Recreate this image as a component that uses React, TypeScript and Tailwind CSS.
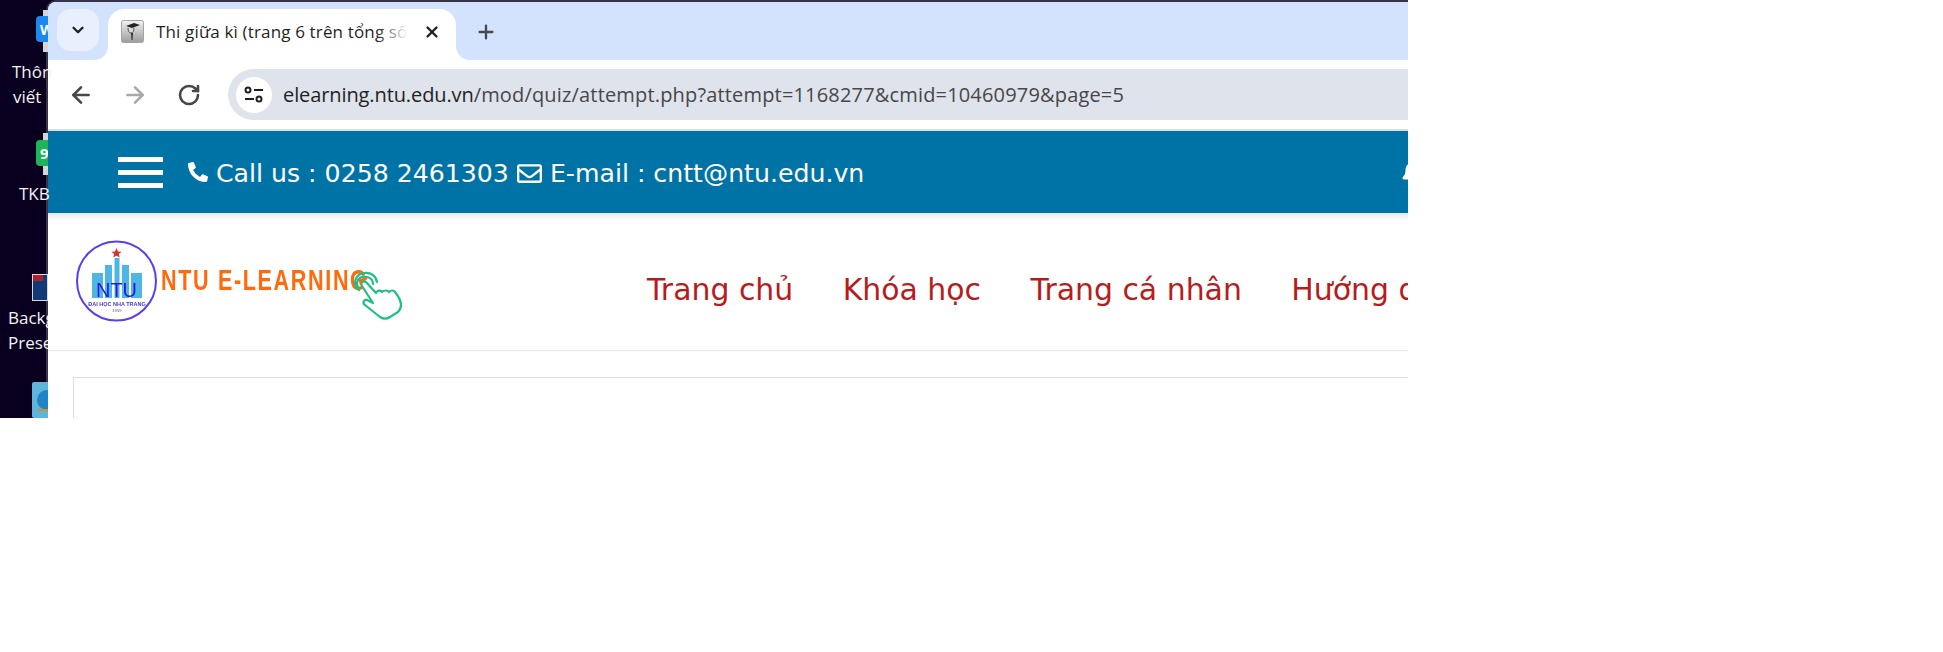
import React from 'react';
import { FaBell, FaPhoneAlt, FaRegEnvelope } from 'react-icons/fa';
import { ArrowLeft, ArrowRight, ChevronDown, Plus, RotateCw, X } from 'lucide-react';

const Desktop = () => (
  <div className="relative w-[46px] shrink-0 bg-[#09001f] font-['Open_Sans',sans-serif] text-[17px] leading-[25px] text-[#f4f4f4]">
    <div className="absolute left-[43px] top-[10px] h-[42px] w-[5px] bg-[#d5d5d5]" />
    <div className="absolute left-[36px] top-[16px] flex h-[26px] w-[12px] items-center overflow-hidden rounded-l-[4px] bg-[#1b87f0] pl-[4px] text-[14px] font-bold text-white">
      W
    </div>
    <div className="absolute left-[12px] top-[59px]">Thôn</div>
    <div className="absolute left-[13px] top-[84px]">viết</div>
    <div className="absolute left-[43px] top-[133px] h-[42px] w-[5px] bg-[#d5d5d5]" />
    <div className="absolute left-[36px] top-[140px] flex h-[26px] w-[12px] items-center overflow-hidden rounded-l-[4px] bg-[#1fb457] pl-[4px] text-[15px] font-bold text-white">
      9
    </div>
    <div className="absolute left-[19px] top-[181px]">TKB</div>
    <div className="absolute left-[32px] top-[274px] h-[27px] w-[16px] overflow-hidden border border-[#d8d8d8] bg-[#123a78]">
      <div className="h-[6px] w-[10px] bg-[#b3202a]" />
    </div>
    <div className="absolute left-[8px] top-[305px]">Backg</div>
    <div className="absolute left-[8px] top-[330px]">Prese</div>
    <div className="absolute left-[32px] top-[382px] h-[36px] w-[16px] overflow-hidden rounded-l-[2px] bg-[#5db5dc] pl-[5px] pt-[8px]">
      <div className="h-[20px] w-[20px] rounded-full bg-[#1c86c8]" />
    </div>
    <div className="absolute left-[38px] top-[409px] h-[2px] w-[10px] bg-[#e08a1e]" />
  </div>
);

const Favicon = () => (
  <svg width="23" height="23" viewBox="0 0 23 23" className="shrink-0">
    <defs>
      <linearGradient id="fav" x1="0" y1="0" x2="0" y2="1">
        <stop offset="0" stopColor="#f2f2f2" />
        <stop offset="1" stopColor="#9c9c9c" />
      </linearGradient>
    </defs>
    <rect x="0.500" y="0.500" width="22" height="22" rx="2" fill="url(#fav)" stroke="#a3a3a3" />
    <path d="M5 6l8-3 6 2-8 3z" fill="#222" />
    <path d="M7 8c0 3 1 5 3 5s3-2 3-5" fill="#d8d8d8" stroke="#555" />
    <path d="M10 13h2l-.500 7h-1z" fill="#333" />
  </svg>
);

const TabBar = () => (
  <div className="flex h-[58px] shrink-0 bg-[#d3e3fd] pl-[9px] pt-[7px]">
    <button className="flex h-[42px] w-[42px] shrink-0 items-center justify-center rounded-[14px] bg-[#e9f0fd]">
      <ChevronDown size={18} strokeWidth={3} className="text-[#1f1f1f]" />
    </button>
    <div className="relative ml-[9px] flex h-[51px] w-[348px] shrink-0 items-center rounded-t-[16px] bg-white pb-[6px] pl-[13px]">
      {/* flared bottom corners of the active tab */}
      <div className="absolute bottom-0 left-[-14px] h-[14px] w-[14px] bg-white">
        <div className="h-full w-full rounded-br-[14px] bg-[#d3e3fd]" />
      </div>
      <div className="absolute bottom-0 right-[-14px] h-[14px] w-[14px] bg-white">
        <div className="h-full w-full rounded-bl-[14px] bg-[#d3e3fd]" />
      </div>
      <Favicon />
      <div className="relative ml-[12px] w-[252px] shrink-0 overflow-hidden whitespace-nowrap font-['Open_Sans',sans-serif] text-[17px] tracking-[0.15px] text-[#1f1f1f]">
        Thi giữa kì (trang 6 trên tổng số
        <div className="absolute right-0 top-0 h-full w-[32px] bg-gradient-to-r from-transparent to-white" />
      </div>
      <X size={18} strokeWidth={3} className="ml-[15px] shrink-0 text-[#1f1f1f]" />
    </div>
    <Plus size={22} strokeWidth={2.5} className="ml-[19px] mt-[12px] shrink-0 text-[#474747]" />
  </div>
);

const Toolbar = () => (
  <div className="flex h-[71px] shrink-0 items-center border-b-2 border-[#dedfdc] bg-white pl-[20px]">
    <ArrowLeft size={26} strokeWidth={2.4} className="shrink-0 text-[#474747]" />
    <ArrowRight size={26} strokeWidth={2.4} className="ml-[28px] shrink-0 text-[#a9a9a9]" />
    <RotateCw size={24} strokeWidth={2.6} className="ml-[29px] shrink-0 text-[#474747]" />
    <div className="ml-[27px] flex h-[51px] flex-1 items-center rounded-l-[26px] bg-[#dfe3eb] pl-[8px]">
      <div className="flex h-[36px] w-[36px] shrink-0 items-center justify-center rounded-full bg-white">
        <svg width="20" height="18" viewBox="0 0 20 18" fill="none" stroke="#1f1f1f" strokeWidth="2">
          <circle cx="4" cy="4" r="2.500" />
          <path d="M10 4h9M1 13h9" />
          <circle cx="15" cy="13" r="2.500" />
        </svg>
      </div>
      <div className="ml-[11px] whitespace-nowrap font-['Open_Sans',sans-serif] text-[20px] tracking-[0.17px] text-[#474747]">
        <span className="tracking-[-0.1px] text-[#1f1f1f]">elearning.ntu.edu.vn</span>/mod/quiz/attempt.php?attempt=1168277&amp;cmid=10460979&amp;page=5
      </div>
    </div>
  </div>
);

const ContactBar = () => (
  <div className="flex h-[82px] shrink-0 items-center overflow-hidden bg-[#0073a6] pl-[70px] font-['DejaVu_Sans',sans-serif] text-[25.2px] text-white">
    <div className="flex w-[45px] shrink-0 flex-col gap-[8px]">
      <div className="h-[5px] bg-white" />
      <div className="h-[5px] bg-white" />
      <div className="h-[5px] bg-white" />
    </div>
    <FaPhoneAlt size={20} className="ml-[25px] shrink-0" />
    <span className="ml-[8px] mt-[4px] shrink-0 whitespace-nowrap">Call us : 0258 2461303</span>
    <FaRegEnvelope size={25} className="ml-[8px] mt-[3px] shrink-0" />
    <span className="ml-[8px] mt-[4px] shrink-0 whitespace-nowrap">E-mail : cntt@ntu.edu.vn</span>
    <FaBell size={24} className="ml-[537px] shrink-0" />
  </div>
);

const Logo = () => (
  <svg width="340" height="95" viewBox="70 235 340 95" className="mt-[22px] shrink-0 blur-[0.3px]">
    <circle cx="116.500" cy="281" r="39.500" fill="white" stroke="#5b3df0" strokeWidth="2" />
    <path d="M116.500 248l1.500 3.400 3.600.3-2.800 2.400.9 3.500-3.200-1.900-3.200 1.900.9-3.500-2.800-2.400 3.600-.3z" fill="#d9322e" />
    <path
      d="M92 273h11v25H92zM105 265h7v33h-7zM114.500 258h5v40h-5zM122 265h7v33h-7zM131 273h11v25h-11z"
      fill="#4db6e2"
    />
    <text x="116.500" y="297" textAnchor="middle" fontFamily="Liberation Sans" fontSize="21" fill="#2a18e0" textLength="41" lengthAdjust="spacingAndGlyphs">
      NTU
    </text>
    <text x="117" y="306" textAnchor="middle" fontFamily="Liberation Sans" fontSize="5.500" fontWeight="700" fill="#4a3bc8">
      ĐẠI HỌC NHA TRANG
    </text>
    <text x="117" y="312" textAnchor="middle" fontFamily="Liberation Sans" fontSize="4" fill="#555">
      1959
    </text>
    <g transform="translate(161 290) scale(0.72 1)">
      <text x="0" y="0" fontFamily="Liberation Sans" fontSize="30" fontWeight="700" fill="#ff6a0d" textLength="286" lengthAdjust="spacing">
        NTU E-LEARNING
      </text>
    </g>
    <g fill="none" stroke="#1fbf8a" strokeWidth="2.200" strokeLinecap="round" strokeLinejoin="round">
      <path d="M362 286c-2-3 1-6 4-4l10 11c1-3 5-3 6-1 2-2 6-2 7 0 2-2 5-2 6 0 4 5 6 9 6 13 0 3-1 5-3 7l-8 5c-3 2-7 2-10 0l-15-12c-3-2-1-6 2-5l6 3z" fill="white" />
      <path d="M358 287c-3-6 2-12 9-10 4 1 6 4 6 7" />
      <path d="M359 290c-7-5-4-16 5-17 7-1 12 3 13 9" />
    </g>
    <path d="M361 285c-2-4 2-8 6-6" fill="none" stroke="#ff6a0d" strokeWidth="2" />
  </svg>
);

const NavRow = () => (
  <div className="relative flex h-[138px] shrink-0 items-start overflow-hidden border-b border-[#e4e4e4] bg-white pl-[22px] shadow-[inset_0_10px_8px_-8px_rgba(0,0,0,0.14)]">
    <Logo />
    <nav className="ml-[237px] mt-[55px] flex shrink-0 gap-[49.5px] whitespace-nowrap font-['DejaVu_Sans',sans-serif] text-[29.9px] text-[#b71c1c]">
      <span>Trang chủ</span>
      <span>Khóa học</span>
      <span>Trang cá nhân</span>
      <span>Hướng dẫn</span>
    </nav>
  </div>
);

export default function App() {
  return (
    <div className="flex h-[418px] w-[1408px] overflow-hidden bg-[#09001f]">
      <Desktop />
      <div className="flex min-w-0 flex-1 flex-col overflow-hidden rounded-tl-[10px] border-l-2 border-t-2 border-[#37344a] bg-white">
        <TabBar />
        <Toolbar />
        <ContactBar />
        <NavRow />
        <div className="ml-[25px] mt-[26px] flex-1 border-l border-t border-[#dddddd]" />
      </div>
    </div>
  );
}
